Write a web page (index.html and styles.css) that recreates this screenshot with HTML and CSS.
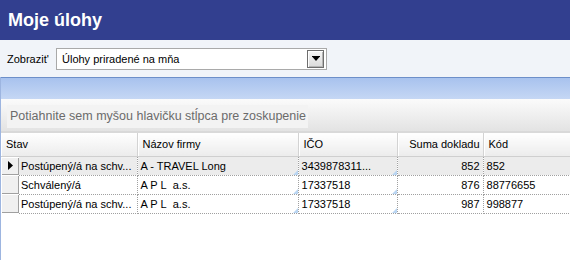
FILE: index.html
```html
<!DOCTYPE html>
<html>
<head>
	<title>Moje úlohy</title>
	<meta charset="utf-8">
	<link rel="stylesheet" href="styles.css">
</head>
<body>
	<div class="titlebar"><h1>Moje úlohy</h1></div>

	<div class="filter">
		<span class="filter-label">Zobrazit'</span>
		<div class="combo">
			<span class="combo-text">Úlohy priradené na mňa</span>
			<span class="combo-btn">
				<svg width="8" height="6" viewBox="0 0 8 6"><rect x="0" y="0" width="8" height="1" fill="#000"/><polygon points="0.5,1 7.5,1 4,5" fill="#000"/></svg>
			</span>
		</div>
	</div>

	<div class="grid">
		<div class="band"></div>
		<div class="group-panel">
			<div class="group-hint">Potiahnite sem myšou hlavičku stĺpca pre zoskupenie</div>
		</div>
		<table class="rows">
			<colgroup>
				<col class="c-ind">
				<col class="c-stav">
				<col class="c-firma">
				<col class="c-ico">
				<col class="c-suma">
				<col class="c-kod">
			</colgroup>
			<thead>
				<tr>
					<th colspan="2">Stav</th>
					<th>Názov firmy</th>
					<th>IČO</th>
					<th class="num">Suma dokladu</th>
					<th>Kód</th>
				</tr>
			</thead>
			<tbody>
				<tr class="current">
					<td class="ind"><svg width="5" height="9" viewBox="0 0 5 9"><polygon points="0,0 5,4.5 0,9" fill="#000"/></svg></td>
					<td class="stav">Postúpený/á na schv...</td>
					<td class="mark">A - TRAVEL Long</td>
					<td class="mark">3439878311...</td>
					<td class="num">852</td>
					<td>852</td>
				</tr>
				<tr>
					<td class="ind"></td>
					<td class="stav">Schválený/á</td>
					<td class="mark">A P L&nbsp; a.s.</td>
					<td class="mark">17337518</td>
					<td class="num">876</td>
					<td>88776655</td>
				</tr>
				<tr>
					<td class="ind"></td>
					<td class="stav">Postúpený/á na schv...</td>
					<td class="mark">A P L&nbsp; a.s.</td>
					<td class="mark">17337518</td>
					<td class="num">987</td>
					<td>998877</td>
				</tr>
			</tbody>
		</table>
	</div>
</body>
</html>
```

FILE: styles.css
```css
body{
	margin: 0;
	width: 570px;
	height: 260px;
	overflow: hidden;
	background: #fff;
	font-family: "Liberation Sans", Arial, sans-serif;
	font-size: 11px;
	color: #000;
}

/* title */
.titlebar{
	height: 40px;
	background: #323f8f;
	padding-left: 8px;
}
.titlebar h1{
	margin: 0;
	font-size: 18px;
	line-height: 40px;
	font-weight: bold;
	color: #fff;
}

/* filter row */
.filter{
	height: 37px;
	background: #f1f4f9;
	display: flex;
	align-items: center;
	padding-left: 7px;
	box-sizing: border-box;
}
.filter-label{
	width: 49px;
}
.combo{
	width: 271px;
	height: 22px;
	box-sizing: border-box;
	border: 1px solid #a9a9a9;
	background: #fff;
	display: flex;
	align-items: center;
	padding: 1px 1px 1px 5px;
}
.combo-text{
	flex: 1;
}
.combo-btn{
	width: 17px;
	height: 18px;
	box-sizing: border-box;
	border: 1px solid #6e6e6e;
	box-shadow: inset 1px 1px 0 #fff, inset -1px -1px 0 #b5b5b5;
	background: linear-gradient(#f6f6f6, #dadada);
	display: flex;
	align-items: center;
	justify-content: center;
	margin-right: 1px;
}

/* grid */
.grid{
	height: 183px;
	border-left: 1px solid #9db5e0;
}
.band{
	height: 21px;
	border-top: 1px solid #6d8fc9;
	background: linear-gradient(#a8c2ee, #c5d7f4);
}
.group-panel{
	height: 34px;
	box-sizing: border-box;
	padding: 6px 0 0 6px;
	background: linear-gradient(#fbfbfb, #e3e3e3);
	border-bottom: 2px solid #d9d9d9;
}
.group-hint{
	width: 301px;
	height: 23px;
	box-sizing: border-box;
	background: #f3f3f3;
	color: #6b6b6b;
	font-size: 12.5px;
	line-height: 23px;
	padding-left: 3px;
	white-space: nowrap;
}

.rows{
	border-collapse: collapse;
	table-layout: fixed;
	width: 569px;
}
.c-ind{ width: 18px; }
.c-stav{ width: 118px; }
.c-firma{ width: 161px; }
.c-ico{ width: 99px; }
.c-suma{ width: 86px; }
.c-kod{ width: 87px; }

.rows th{
	height: 23px;
	box-sizing: border-box;
	padding: 0 4px 0 5px;
	text-align: left;
	font-weight: normal;
	background: linear-gradient(#ffffff, #ececec);
	border-right: 1px solid #d3d3d3;
	box-shadow: inset 1px 0 0 #fff;
	border-bottom: 1px solid #cfcfcf;
	white-space: nowrap;
	overflow: hidden;
}
.rows th.num{
	text-align: right;
	padding-right: 3px;
}

.rows td{
	height: 19px;
	box-sizing: border-box;
	padding: 0 3px;
	border-right: 1px dotted #a0a0a0;
	border-bottom: 1px dotted #a0a0a0;
	white-space: nowrap;
	overflow: hidden;
	position: relative;
}
.rows td.stav{
	padding-left: 2px;
}
.rows td.num{
	text-align: right;
}
.rows tr.current td{
	background: #ececec;
}
.rows td.ind{
	padding: 0;
	background: #f0f0f0;
	border: none;
	box-shadow: inset 1px 1px 0 #fff, inset -1px -1px 0 #a0a0a0;
}
.rows tr.current td.ind{
	background: #f0f0f0;
}
.rows td.ind svg{
	display: block;
	margin: 0 auto;
}

/* blue corner marks */
.rows td.mark::after{
	content: "";
	position: absolute;
	right: 0;
	bottom: 0;
	border-style: solid;
	border-width: 0 0 5px 5px;
	border-color: transparent transparent #b9d5f2 transparent;
}
```
